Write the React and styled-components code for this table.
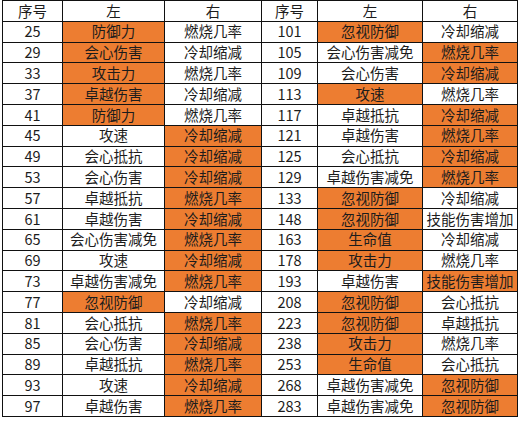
import React from 'react';
import styled, { createGlobalStyle } from 'styled-components';

const Global = createGlobalStyle`
  html, body { margin: 0; padding: 0; background: #fff; }
  body { font-family: 'Noto Sans CJK SC', 'Noto Sans', sans-serif; }
`;

const ORANGE = '#ed7d31';

const Sheet = styled.div`
  margin-left: 2px;
  display: grid;
  grid-template-columns: 60px 102px 97px 56px 105px 95px;
  grid-auto-rows: 20.8px;
  width: max-content;
  border-top: 1px solid #111;
  border-left: 1px solid #111;
`;

const Cell = styled.div`
  display: flex;
  align-items: center;
  justify-content: center;
  box-sizing: border-box;
  border-right: 1px solid #111;
  border-bottom: 1px solid #111;
  background: ${p => (p.$hot ? ORANGE : '#fff')};
  color: #1c1c1c;
  font-size: 14.5px;
  line-height: 1;
  white-space: nowrap;
  overflow: hidden;
`;

// [序号, 左, 右, which one is highlighted: 'l' | 'r']
const LEFT = [
  [25, '防御力', '燃烧几率', 'l'],
  [29, '会心伤害', '冷却缩减', 'l'],
  [33, '攻击力', '燃烧几率', 'l'],
  [37, '卓越伤害', '冷却缩减', 'l'],
  [41, '防御力', '燃烧几率', 'l'],
  [45, '攻速', '冷却缩减', 'r'],
  [49, '会心抵抗', '冷却缩减', 'r'],
  [53, '会心伤害', '冷却缩减', 'r'],
  [57, '卓越抵抗', '燃烧几率', 'r'],
  [61, '卓越伤害', '冷却缩减', 'r'],
  [65, '会心伤害减免', '燃烧几率', 'r'],
  [69, '攻速', '冷却缩减', 'r'],
  [73, '卓越伤害减免', '燃烧几率', 'r'],
  [77, '忽视防御', '冷却缩减', 'l'],
  [81, '会心抵抗', '燃烧几率', 'r'],
  [85, '会心伤害', '冷却缩减', 'r'],
  [89, '卓越抵抗', '燃烧几率', 'r'],
  [93, '攻速', '冷却缩减', 'r'],
  [97, '卓越伤害', '燃烧几率', 'r'],
];

const RIGHT = [
  [101, '忽视防御', '冷却缩减', 'l'],
  [105, '会心伤害减免', '燃烧几率', 'r'],
  [109, '会心伤害', '冷却缩减', 'r'],
  [113, '攻速', '燃烧几率', 'l'],
  [117, '卓越抵抗', '冷却缩减', 'r'],
  [121, '卓越伤害', '燃烧几率', 'r'],
  [125, '会心抵抗', '冷却缩减', 'r'],
  [129, '卓越伤害减免', '燃烧几率', 'r'],
  [133, '忽视防御', '冷却缩减', 'l'],
  [148, '忽视防御', '技能伤害增加', 'l'],
  [163, '生命值', '冷却缩减', 'l'],
  [178, '攻击力', '燃烧几率', 'l'],
  [193, '卓越伤害', '技能伤害增加', 'r'],
  [208, '忽视防御', '会心抵抗', 'l'],
  [223, '忽视防御', '卓越抵抗', 'l'],
  [238, '攻击力', '燃烧几率', 'l'],
  [253, '生命值', '会心抵抗', 'l'],
  [268, '卓越伤害减免', '忽视防御', 'r'],
  [283, '卓越伤害减免', '忽视防御', 'r'],
];

const HEAD = ['序号', '左', '右', '序号', '左', '右'];

export default function App() {
  return (
    <>
      <Global />
      <Sheet>
        {HEAD.map((h, i) => <Cell key={'h' + i}>{h}</Cell>)}
        {LEFT.map((row, i) => {
          const other = RIGHT[i];
          return (
            <React.Fragment key={row[0]}>
              <Cell>{row[0]}</Cell>
              <Cell $hot={row[3] === 'l'}>{row[1]}</Cell>
              <Cell $hot={row[3] === 'r'}>{row[2]}</Cell>
              <Cell>{other[0]}</Cell>
              <Cell $hot={other[3] === 'l'}>{other[1]}</Cell>
              <Cell $hot={other[3] === 'r'}>{other[2]}</Cell>
            </React.Fragment>
          );
        })}
      </Sheet>
    </>
  );
}
